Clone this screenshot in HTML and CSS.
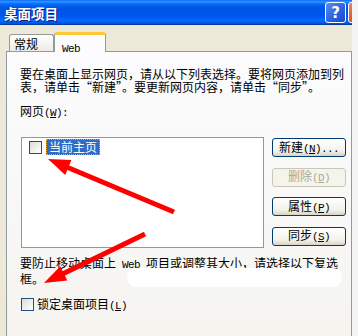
FILE: index.html
```html
<!DOCTYPE html>
<html lang="zh-CN">
<head>
    <meta charset="UTF-8">
    <title>桌面项目</title>
    <link rel="stylesheet" href="styles.css">
</head>
<body>
    <div class="window">
        <div class="titlebar">
            <span class="title">桌面项目</span>
            <div class="controls">
                <span class="tbtn help">?</span>
                <span class="tbtn close"></span>
            </div>
        </div>

        <div class="tabs">
            <div class="tab">常规</div>
            <div class="tab active"><span class="latin">Web</span></div>
        </div>

        <div class="panel">
            <p class="intro">要在桌面上显示网页，请从以下列表选择。要将网页添加到列表，请单击“新建”。要更新网页内容，请单击“同步”。</p>

            <div class="label">网页<span class="latin">(<u>W</u>):</span></div>
            <div class="pages">
                <div class="listbox">
                    <div class="item">
                        <span class="check"></span>
                        <span class="selected">当前主页</span>
                    </div>
                </div>
                <div class="buttons">
                    <button>新建<span class="latin">(<u>N</u>)...</span></button>
                    <button disabled>删除<span class="latin">(<u>D</u>)</span></button>
                    <button>属性<span class="latin">(<u>P</u>)</span></button>
                    <button>同步<span class="latin">(<u>S</u>)</span></button>
                </div>
            </div>

            <p class="note">要防止移动桌面上<span class="latin"> Web </span>项目或调整其大小，请选择以下复选<br>框。</p>

            <div class="lock">
                <span class="check"></span>
                <span>锁定桌面项目<span class="latin">(<u>L</u>)</span></span>
            </div>
        </div>

        <!-- annotations drawn over the dialog -->
        <svg class="marks" width="352" height="336" viewBox="0 0 352 336">
            <rect x="127" y="268" width="215" height="19" rx="9" fill="#ffffff"/>
            <line x1="174" y1="212" x2="66" y2="166.8" stroke="#ff0000" stroke-width="5"/>
            <polygon points="48,159 71.4,160.1 65.2,174.9" fill="#ff0000"/>
            <line x1="145" y1="234" x2="62" y2="274.3" stroke="#ff0000" stroke-width="5"/>
            <polygon points="44,283 67.3,280.6 60.3,266.2" fill="#ff0000"/>
        </svg>
    </div>
</body>
</html>
```

FILE: styles.css
```css
body {
    margin: 0;
    background: #f4f4f4;
    font-family: "Noto Sans CJK SC", sans-serif;
    font-size: 12px;
    color: #000;
}
.window {
    position: relative;
    width: 352px;
    height: 336px;
    overflow: hidden;
    background: #ece9d8;
}
.titlebar {
    display: flex;
    align-items: center;
    height: 25px;
    padding-left: 4px;
    background: linear-gradient(#0058ee 0%, #3593ff 4%, #288eff 8%, #127dff 12%, #036ffc 16%, #0262ee 22%, #0057e5 30%, #0054e3 40%, #0055eb 60%, #005bf5 70%, #026afe 80%, #0062ef 88%, #0052d6 94%, #003092 100%);
}
.title {
    color: #fff;
    font-size: 13.5px;
    font-weight: bold;
    text-shadow: 1px 1px #0a1883;
}
.controls {
    display: flex;
    gap: 2px;
    margin-left: auto;
    margin-right: -17px;
    flex-shrink: 0;
}
.tbtn {
    display: flex;
    align-items: center;
    justify-content: center;
    width: 21px;
    height: 21px;
    box-sizing: border-box;
    border: 1px solid #fff;
    border-radius: 3px;
    color: #fff;
    font-family: "DejaVu Sans", sans-serif;
    font-size: 15px;
    font-weight: bold;
}
.help { background: linear-gradient(135deg, #5a8cf5, #2a5fe0 60%, #1a48c8); }
.close { background: linear-gradient(135deg, #e88a6c, #d8492a 60%, #c03a1c); }

.tabs {
    display: flex;
    align-items: flex-end;
    margin-top: 7px;
    padding-left: 9px;
}
.tab {
    box-sizing: border-box;
    width: 45px;
    height: 17px;
    padding: 2px 0 0 4px;
    border: 1px solid #919b9c;
    border-bottom: none;
    border-radius: 3px 3px 0 0;
    background: linear-gradient(#ffffff, #ecebe6);
    line-height: 13px;
}
.tab.active {
    position: relative;
    z-index: 1;
    width: 52px;
    height: 20px;
    margin-bottom: -1px;
    padding: 5px 0 0 7px;
    border-top: 3px solid #ffc83c;
    border-radius: 3px 3px 0 0;
    background: #fcfcfe;
}
.latin {
    font-family: "Liberation Mono", monospace;
    font-size: 11px;
    letter-spacing: -0.6px;
}

.panel {
    height: 300px;
    margin-left: 6px;
    padding: 15px 5px 0 13px;
    border: 1px solid #919b9c;
    background: linear-gradient(#fcfcfe, #f4f3ee);
    line-height: 13px;
}
.intro, .note { margin: 0; }
.label { margin: 11px 0 17px; }
.pages {
    display: flex;
    align-items: flex-start;
}
.listbox {
    box-sizing: border-box;
    width: 245px;
    height: 111px;
    margin-left: 1px;
    padding: 1px 0 0 7px;
    border: 1px solid #7f9db9;
    background: #fff;
}
.item {
    display: flex;
    align-items: center;
    gap: 4px;
}
.check {
    box-sizing: border-box;
    width: 13px;
    height: 13px;
    border: 1px solid #1c5180;
    background: linear-gradient(135deg, #dcdcd7, #ffffff);
}
.selected {
    padding: 0 2px;
    border: 1px dotted #f0a030;
    background: #316ac5;
    color: #fff;
    line-height: 14px;
}
.buttons {
    display: flex;
    flex-direction: column;
    gap: 10.6px;
    margin: 1px 0 0 8px;
}
button {
    width: 74px;
    height: 19px;
    padding: 0;
    border: 1px solid #003c74;
    border-radius: 3px;
    background: linear-gradient(#ffffff, #f3f2ea 70%, #d8d3c6);
    font-family: inherit;
    font-size: 12px;
    line-height: 13px;
    color: #000;
}
button:disabled {
    border-color: #c9c7ba;
    background: #f5f4ea;
    color: #aca899;
}
.note { margin-top: 8px; }
.lock {
    display: flex;
    align-items: center;
    gap: 3px;
    height: 15px;
    margin: 12px 0 0 1px;
}
.marks {
    position: absolute;
    top: 0;
    left: 0;
    pointer-events: none;
}
```
